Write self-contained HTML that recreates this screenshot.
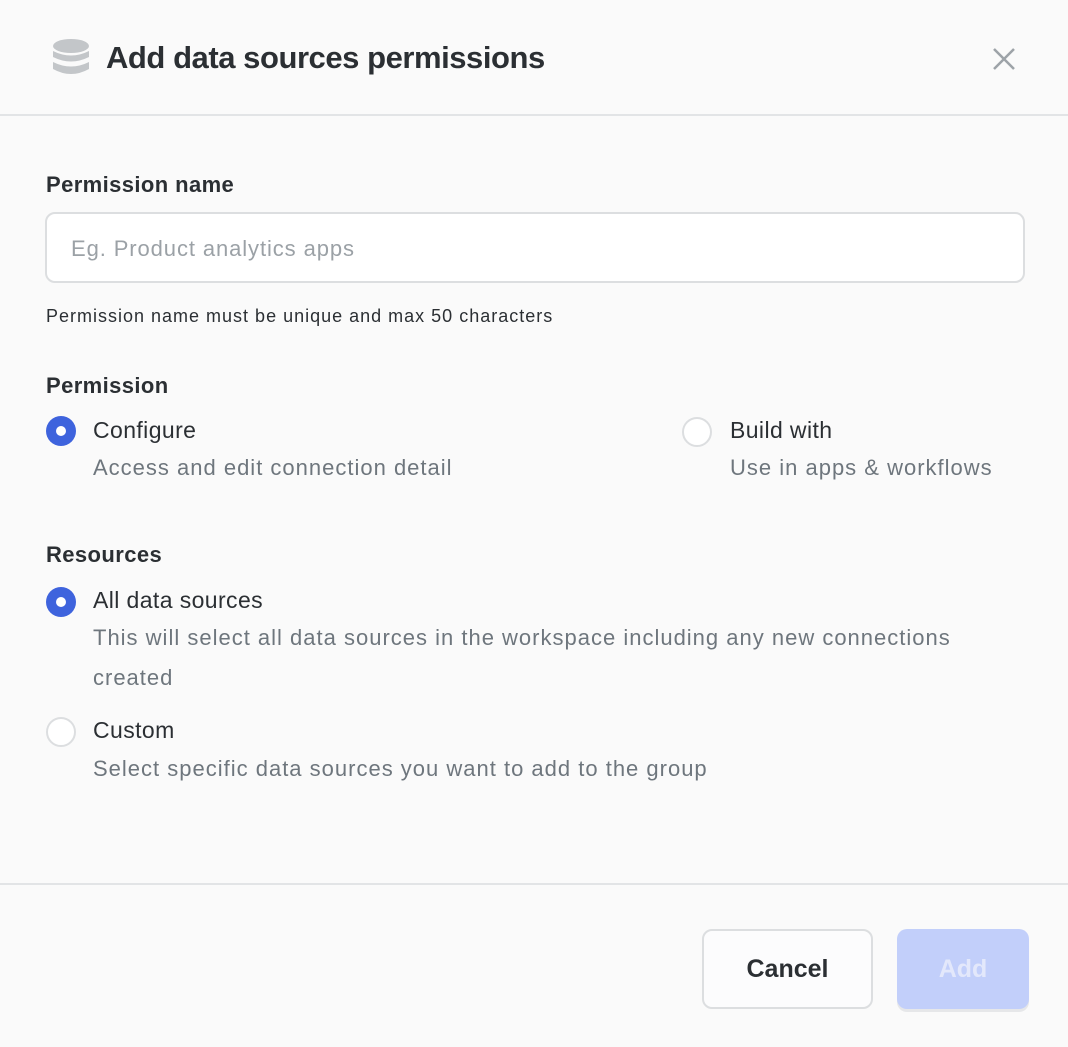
<!DOCTYPE html>
<html><head><style>
body{margin:0;width:1068px;height:1047px;background:#fafafa;font-family:"Liberation Sans",sans-serif;position:relative;overflow:hidden;color:#2b2f33}
.a{position:absolute;white-space:nowrap}
.r{position:absolute;width:30px;height:30px;border-radius:50%;box-sizing:border-box}
.on{background:#3e63dd}
.on:after{content:"";position:absolute;left:10px;top:10px;width:10px;height:10px;border-radius:50%;background:#fff}
.off{border:2px solid #dcdee0;background:#fff}
.lab{font-size:23px;color:#2b2f33;letter-spacing:0.4px}
.sub{font-size:22px;color:#6e767d;letter-spacing:1px}
.h{font-size:22px;font-weight:bold;color:#2b2f33;letter-spacing:0.4px}
</style></head><body>
<svg class="a" style="left:52px;top:38px" width="38" height="40" viewBox="0 0 38 40">
<ellipse cx="19" cy="8" rx="18" ry="7" fill="#c3c6c9"/>
<path d="M1 13 Q19 22 37 13 V19 Q19 28 1 19Z" fill="#c3c6c9"/>
<path d="M1 24 Q19 33 37 24 V31 Q19 41 1 31Z" fill="#c3c6c9"/>
</svg>
<div class="a" style="left:106px;top:40px;font-size:31px;font-weight:bold;color:#2b2f33;letter-spacing:-0.45px">Add data sources permissions</div>
<svg class="a" style="left:992px;top:47px" width="24" height="24"><path d="M2 2L22 22M22 2L2 22" stroke="#9da3a8" stroke-width="2.5"/></svg>
<div class="a" style="left:0;top:114px;width:1068px;height:2px;background:#e2e4e6"></div>
<div class="a h" style="left:46px;top:172px">Permission name</div>
<div class="a" style="left:45px;top:212px;width:980px;height:71px;box-sizing:border-box;border:2px solid #dcdee0;border-radius:10px;background:#fff"></div>
<div class="a" style="left:71px;top:236px;font-size:22px;color:#9ba1a6;letter-spacing:0.9px">Eg. Product analytics apps</div>
<div class="a" style="left:46px;top:306px;font-size:18px;color:#2b2f33;letter-spacing:1px">Permission name must be unique and max 50 characters</div>
<div class="a h" style="left:46px;top:373px">Permission</div>
<div class="r on" style="left:46px;top:416px"></div>
<div class="a lab" style="left:93px;top:417px">Configure</div>
<div class="a sub" style="left:93px;top:455px">Access and edit connection detail</div>
<div class="r off" style="left:682px;top:417px"></div>
<div class="a lab" style="left:730px;top:417px">Build with</div>
<div class="a sub" style="left:730px;top:455px">Use in apps &amp; workflows</div>
<div class="a h" style="left:46px;top:542px">Resources</div>
<div class="r on" style="left:46px;top:587px"></div>
<div class="a lab" style="left:93px;top:587px">All data sources</div>
<div class="a sub" style="left:93px;top:625px">This will select all data sources in the workspace including any new connections</div>
<div class="a sub" style="left:93px;top:665px">created</div>
<div class="r off" style="left:46px;top:717px"></div>
<div class="a lab" style="left:93px;top:717px">Custom</div>
<div class="a sub" style="left:93px;top:756px">Select specific data sources you want to add to the group</div>
<div class="a" style="left:0;top:883px;width:1068px;height:2px;background:#e2e4e6"></div>
<div class="a" style="left:702px;top:929px;width:171px;height:80px;box-sizing:border-box;border:2px solid #dcdee0;border-radius:10px;background:#fcfcfd;text-align:center;line-height:76px;font-size:25px;font-weight:bold;color:#2b2f33">Cancel</div>
<div class="a" style="left:897px;top:929px;width:132px;height:80px;border-radius:10px;background:#c2cffa;box-shadow:0 3px 0 #e6e7e9;text-align:center;line-height:80px;font-size:25px;font-weight:bold;color:#e3e8fb">Add</div>
</body></html>
